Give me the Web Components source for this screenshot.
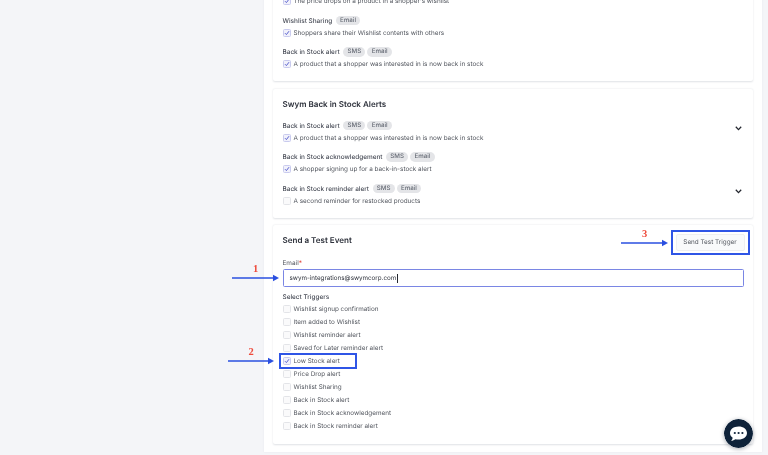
<!DOCTYPE html>
<html>
<head>
<meta charset="utf-8">
<title>Send a Test Event</title>
<style>
    html, body { margin: 0; height: 100%; overflow: hidden; background: #f4f5f8; }
    body { font-family: Inter, "Liberation Sans", sans-serif; text-rendering: geometricPrecision; }
</style>
</head>
<body>
<swym-page>
    <swym-card>
        <swym-alert label="Price Drop alert" chips="Email" text="The price drops on a product in a shopper's wishlist" checked></swym-alert>
        <swym-alert label="Wishlist Sharing" chips="Email" text="Shoppers share their Wishlist contents with others" checked></swym-alert>
        <swym-alert label="Back in Stock alert" chips="SMS,Email" text="A product that a shopper was interested in is now back in stock" checked></swym-alert>
    </swym-card>
    <swym-card heading="Swym Back in Stock Alerts">
        <swym-alert label="Back in Stock alert" chips="SMS,Email" text="A product that a shopper was interested in is now back in stock" checked expandable></swym-alert>
        <swym-alert label="Back in Stock acknowledgement" chips="SMS,Email" text="A shopper signing up for a back-in-stock alert" checked></swym-alert>
        <swym-alert label="Back in Stock reminder alert" chips="SMS,Email" text="A second reminder for restocked products" expandable></swym-alert>
    </swym-card>
    <swym-card heading="Send a Test Event">
        <swym-button slot="action">Send Test Trigger</swym-button>
        <swym-field label="Email" value="swym-integrations@swymcorp.com"></swym-field>
        <swym-triggers title-text="Select Triggers">
            <swym-check>Wishlist signup confirmation</swym-check>
            <swym-check>Item added to Wishlist</swym-check>
            <swym-check>Wishlist reminder alert</swym-check>
            <swym-check>Saved for Later reminder alert</swym-check>
            <swym-check checked>Low Stock alert</swym-check>
            <swym-check>Price Drop alert</swym-check>
            <swym-check>Wishlist Sharing</swym-check>
            <swym-check>Back in Stock alert</swym-check>
            <swym-check>Back in Stock acknowledgement</swym-check>
            <swym-check>Back in Stock reminder alert</swym-check>
        </swym-triggers>
    </swym-card>

    <swym-note slot="overlay" n="1" x="232" y="278" len="47"></swym-note>
    <swym-note slot="overlay" n="2" x="228" y="361" len="46"></swym-note>
    <swym-note slot="overlay" n="3" x="621" y="243" len="47"></swym-note>
    <swym-box slot="overlay" x="279" y="353" w="78" h="16"></swym-box>
    <swym-box slot="overlay" x="671" y="230" w="79" h="25"></swym-box>
    <swym-chat slot="overlay"></swym-chat>
</swym-page>

<script>
class SwymPage extends HTMLElement {
    constructor() {
        super();
        this.attachShadow({ mode: 'open' });
        this.shadowRoot.innerHTML = `
            <style>
                :host { display: block; position: relative; width: 768px; height: 455px; overflow: hidden; filter: blur(.3px); }
                .layout { display: grid; grid-template-columns: 264px 498px; margin-top: -36px; }
                .panel {
                    background: #fff;
                    padding: 0 9px 8px;
                    display: flex;
                    flex-direction: column;
                    gap: 7.5px;
                    box-shadow: 0 0 2px rgba(30, 40, 70, .06);
                }
            </style>
            <div class="layout">
                <div></div>
                <div class="panel"><slot></slot></div>
            </div>
            <slot name="overlay"></slot>
        `;
    }
}

class SwymCard extends HTMLElement {
    constructor() {
        super();
        this.attachShadow({ mode: 'open' });
        this.shadowRoot.innerHTML = `
            <style>
                :host {
                    display: block;
                    background: #fff;
                    padding: 9px 9.5px 11px;
                    border-radius: 2px;
                    box-shadow: 0 .5px 2px rgba(30, 40, 70, .14);
                }
                header { display: flex; justify-content: space-between; align-items: flex-start; }
                h2 { margin: 0; font-size: 8.05px; line-height: 12px; font-weight: 600; color: #2c303a; }
                .hidden { display: none; }
            </style>
            <header class="hidden"><h2></h2><slot name="action"></slot></header>
            <slot></slot>
        `;
    }
    connectedCallback() {
        if (this.hasAttribute('heading')) {
            this.shadowRoot.querySelector('h2').textContent = this.getAttribute('heading');
            this.shadowRoot.querySelector('header').classList.remove('hidden');
        }
    }
}

class SwymAlert extends HTMLElement {
    constructor() {
        super();
        this.attachShadow({ mode: 'open' });
        this.shadowRoot.innerHTML = `
            <style>
                :host { display: block; position: relative; margin-top: 7.5px; font-size: 6.45px; }
                :host(:first-child) { margin-top: 10px; }
                .label { display: flex; align-items: center; gap: 2px; height: 12px; color: #474b56; font-weight: 500; }
                .chip {
                    background: #e4e5e8;
                    color: #666b75;
                    border-radius: 5px;
                    padding: 0 4.3px;
                    font-size: 6.2px;
                    line-height: 9.5px;
                }
                .name { margin-right: 1.5px; }
                svg { position: absolute; right: 1.5px; top: 6.5px; }
            </style>
            <div class="label"><span class="name"></span></div>
            <swym-check></swym-check>
        `;
    }
    connectedCallback() {
        const root = this.shadowRoot;
        root.querySelector('.name').textContent = this.getAttribute('label');
        this.getAttribute('chips').split(',').forEach(c => {
            const chip = document.createElement('span');
            chip.className = 'chip';
            chip.textContent = c;
            root.querySelector('.label').appendChild(chip);
        });
        const check = root.querySelector('swym-check');
        check.textContent = this.getAttribute('text');
        if (this.hasAttribute('checked')) check.setAttribute('checked', '');
        if (this.hasAttribute('expandable')) {
            root.innerHTML += `<svg width="7" height="5" viewBox="0 0 7 5"><path d="M.8 .8 3.5 3.6 6.2 .8" fill="none" stroke="#23262e" stroke-width="1.3"/></svg>`;
        }
    }
}

class SwymCheck extends HTMLElement {
    constructor() {
        super();
        this.attachShadow({ mode: 'open' });
        this.shadowRoot.innerHTML = `
            <style>
                :host { display: flex; align-items: center; gap: 3px; height: 12px; font-size: 6.35px; color: #53575f; font-weight: 400; }
                .box {
                    box-sizing: border-box;
                    width: 8px;
                    height: 8px;
                    border: 1px solid #e3e4e8;
                    border-radius: 1.5px;
                    background: #fafafb;
                    display: grid;
                    place-items: center;
                }
                :host([checked]) .box { border-color: #c9cbee; background: #f1f1fb; }
                svg { display: none; }
                :host([checked]) svg { display: block; }
            </style>
            <span class="box"><svg width="6" height="6" viewBox="0 0 6 6"><path d="M1 3.2 2.4 4.6 5 1.2" fill="none" stroke="#5a62cf" stroke-width="1"/></svg></span>
            <span><slot></slot></span>
        `;
    }
}

class SwymButton extends HTMLElement {
    constructor() {
        super();
        this.attachShadow({ mode: 'open' });
        this.shadowRoot.innerHTML = `
            <style>
                :host {
                    display: block;
                    box-sizing: border-box;
                    width: 69px;
                    height: 17px;
                    margin-right: -1px;
                    border: 1px solid #eeeff1;
                    border-radius: 2px;
                    background: #f9fafb;
                    color: #53575f;
                    font-size: 6.35px;
                    line-height: 15px;
                    text-align: center;
                }
            </style>
            <slot></slot>
        `;
    }
}

class SwymField extends HTMLElement {
    constructor() {
        super();
        this.attachShadow({ mode: 'open' });
        this.shadowRoot.innerHTML = `
            <style>
                :host { display: block; margin-top: 6px; font-size: 6.45px; color: #53575f; }
                label { display: block; line-height: 12px; }
                b { color: #e0483e; font-weight: 400; }
                .input {
                    box-sizing: border-box;
                    height: 18px;
                    width: 461px;
                    padding: 0 6px;
                    display: flex;
                    align-items: center;
                    border: 1px solid #7a86e4;
                    border-radius: 1.5px;
                    color: #30343e;
                    font-size: 6.25px;
                }
                i { width: .7px; height: 9px; margin-left: .5px; background: #23262e; }
            </style>
            <label><span></span><b>*</b></label>
            <div class="input"><span class="value"></span><i></i></div>
        `;
    }
    connectedCallback() {
        this.shadowRoot.querySelector('label span').textContent = this.getAttribute('label');
        this.shadowRoot.querySelector('.value').textContent = this.getAttribute('value');
    }
}

class SwymTriggers extends HTMLElement {
    constructor() {
        super();
        this.attachShadow({ mode: 'open' });
        this.shadowRoot.innerHTML = `
            <style>
                :host { display: block; margin-top: 5px; }
                .title { font-size: 6.45px; line-height: 10.5px; font-weight: 500; color: #474b56; }
                .rows { display: grid; grid-auto-rows: 13px; align-items: center; }
            </style>
            <div class="title"></div>
            <div class="rows"><slot></slot></div>
        `;
    }
    connectedCallback() {
        this.shadowRoot.querySelector('.title').textContent = this.getAttribute('title-text');
    }
}

// the hand drawn markers lying over the screenshot
class SwymNote extends HTMLElement {
    constructor() {
        super();
        this.attachShadow({ mode: 'open' });
    }
    connectedCallback() {
        const x = +this.getAttribute('x');
        const y = +this.getAttribute('y');
        const len = +this.getAttribute('len');
        this.shadowRoot.innerHTML = `
            <style>
                :host { position: absolute; left: ${x}px; top: ${y - 14}px; width: ${len}px; height: 19px; }
                span {
                    position: absolute;
                    left: 0;
                    right: 0;
                    top: 0;
                    text-align: center;
                    font: bold 10.5px/12px "Liberation Serif", serif;
                    color: #ee4b3c;
                }
                svg { position: absolute; left: 0; top: 10px; }
            </style>
            <span>${this.getAttribute('n')}</span>
            <svg width="${len}" height="8" viewBox="0 0 ${len} 8">
                <path d="M0 4H${len - 5}" stroke="#2a4fe0" stroke-width="1.5"/>
                <path d="M${len - 6} .8 ${len} 4 ${len - 6} 7.2Z" fill="#2a4fe0"/>
            </svg>
        `;
    }
}

class SwymBox extends HTMLElement {
    constructor() {
        super();
        this.attachShadow({ mode: 'open' });
    }
    connectedCallback() {
        const a = n => this.getAttribute(n) + 'px';
        this.shadowRoot.innerHTML = `
            <style>
                :host {
                    position: absolute;
                    box-sizing: border-box;
                    left: ${a('x')};
                    top: ${a('y')};
                    width: ${a('w')};
                    height: ${a('h')};
                    border: 2px solid #2f55e6;
                }
            </style>
        `;
    }
}

class SwymChat extends HTMLElement {
    constructor() {
        super();
        this.attachShadow({ mode: 'open' });
        this.shadowRoot.innerHTML = `
            <style>
                :host { position: absolute; left: 724px; top: 419px; width: 29px; height: 29px; }
                svg { display: block; border-radius: 50%; box-shadow: 0 1px 4px rgba(10, 20, 40, .35); }
            </style>
            <svg width="29" height="29" viewBox="0 0 29 29">
                <circle cx="14.5" cy="14.5" r="14.5" fill="#0e2239"/>
                <path d="M14.5 7.5C9.6 7.5 6 10.3 6 14c0 2 1 3.6 2.7 4.8-.2 1.2-.8 2.2-1.6 2.9 1.8 0 3.2-.6 4.3-1.5 1 .3 2 .4 3.1.4 4.9 0 8.5-2.8 8.5-6.6s-3.6-6.5-8.5-6.5Z" fill="#fff"/>
                <circle cx="10.8" cy="14" r="1.1" fill="#0e2239"/>
                <circle cx="14.6" cy="14" r="1.1" fill="#0e2239"/>
                <circle cx="18.4" cy="14" r="1.1" fill="#0e2239"/>
            </svg>
        `;
    }
}

customElements.define('swym-page', SwymPage);
customElements.define('swym-card', SwymCard);
customElements.define('swym-alert', SwymAlert);
customElements.define('swym-check', SwymCheck);
customElements.define('swym-button', SwymButton);
customElements.define('swym-field', SwymField);
customElements.define('swym-triggers', SwymTriggers);
customElements.define('swym-note', SwymNote);
customElements.define('swym-box', SwymBox);
customElements.define('swym-chat', SwymChat);
</script>
</body>
</html>
